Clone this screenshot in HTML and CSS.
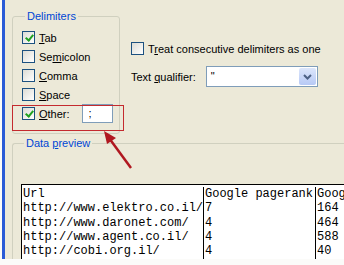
FILE: index.html
```html
<!DOCTYPE html>
<html lang="en">
<head>
  <meta charset="UTF-8" />
  <title>Text Import Wizard</title>
  <link rel="stylesheet" href="styles.css">
</head>
<body>
  <div class="frame">
    <div class="top">
      <fieldset class="group delims">
        <legend>Delimiters</legend>
        <label class="row"><span class="box checked"></span><span><u>T</u>ab</span></label>
        <label class="row"><span class="box"></span><span>Se<u>m</u>icolon</span></label>
        <label class="row"><span class="box"></span><span><u>C</u>omma</span></label>
        <label class="row"><span class="box"></span><span><u>S</u>pace</span></label>
        <label class="row other"><span class="box checked"></span><span><u>O</u>ther:</span><span class="field">;</span></label>
      </fieldset>

      <div class="options">
        <label class="row"><span class="box"></span><span>T<u>r</u>eat consecutive delimiters as one</span></label>
        <div class="qualifier">
          <span>Text <u>q</u>ualifier:</span>
          <div class="combo">
            <span class="combo-value">"</span>
            <span class="combo-btn">
              <svg width="9" height="6" viewBox="0 0 9 6"><path d="M1 1 L4.5 4.5 L8 1" fill="none" stroke="#4d6185" stroke-width="2"/></svg>
            </span>
          </div>
        </div>
      </div>
    </div>

    <fieldset class="group preview">
      <legend>Data <u>p</u>review</legend>
      <div class="grid">
        <div class="col c1">
          <div>Url</div>
          <div>http://www.elektro.co.il/</div>
          <div>http://www.daronet.com/</div>
          <div>http://www.agent.co.il/</div>
          <div>http://cobi.org.il/</div>
        </div>
        <div class="col c2">
          <div>Google pagerank</div>
          <div>7</div>
          <div>4</div>
          <div>4</div>
          <div>4</div>
        </div>
        <div class="col c3">
          <div>Goog</div>
          <div>164</div>
          <div>464</div>
          <div>588</div>
          <div>40</div>
        </div>
      </div>
    </fieldset>

    <!-- annotation overlay -->
    <div class="highlight"></div>
    <svg class="arrow" width="40" height="45" viewBox="0 0 40 45">
      <line x1="30" y1="38" x2="8" y2="8" stroke="#b01820" stroke-width="2.5"/>
      <polygon points="3,1 15,8 6,14" fill="#b01820"/>
    </svg>
  </div>
  <div class="bottom"></div>
</body>
</html>
```

FILE: styles.css
```css
* {
  box-sizing: border-box;
}

body {
  margin: 0;
  width: 344px;
  height: 265px;
  overflow: hidden;
  background: #fbfbf9;
  font-family: "Liberation Sans", Arial, sans-serif;
  font-size: 11px;
  color: #000;
}

.frame {
  position: relative;
  height: 259px;
  margin-left: 2px;
  border-left: 3px solid #2a5bd7;
  background: #ece9d8;
  padding: 10px 0 0 7px;
  overflow: hidden;
}

.top {
  display: flex;
  gap: 11px;
}

.group {
  margin: 0;
  border: 1px solid #d0d0bf;
  border-radius: 3px;
  padding: 0;
}

.group legend {
  color: #0046d5;
  padding: 0 2px;
  margin-left: 3px;
  line-height: 13px;
}

.delims {
  width: 108px;
  height: 124px;
  padding: 5px 0 0 9px;
}

.row {
  display: flex;
  align-items: center;
  gap: 4px;
  height: 19px;
}

.box {
  width: 13px;
  height: 13px;
  border: 1px solid #1c5180;
  background: linear-gradient(135deg, #dcdcd5, #fff);
  flex: none;
}

.box.checked {
  position: relative;
}

.box.checked::after {
  content: "";
  position: absolute;
  left: 2px;
  top: 1px;
  width: 3px;
  height: 6px;
  border: solid #21a121;
  border-width: 0 2px 2px 0;
  transform: translate(2px, 0) rotate(40deg);
}

.other .field {
  margin-left: 8px;
  width: 31px;
  height: 19px;
  border: 1px solid #7f9db9;
  background: #fff;
  padding: 2px 0 0 6px;
}

.options {
  padding-top: 29px;
}

.qualifier {
  display: flex;
  align-items: center;
  margin-top: 8px;
  gap: 10px;
}

.combo {
  width: 112px;
  height: 21px;
  border: 1px solid #7f9db9;
  background: #fff;
  display: flex;
  justify-content: space-between;
  padding: 1px;
}

.combo-value {
  padding: 2px 0 0 3px;
}

.combo-btn {
  width: 17px;
  background: linear-gradient(#dce6fb, #b7c9f5);
  border-radius: 2px;
  display: flex;
  align-items: center;
  justify-content: center;
}

.preview {
  margin-top: 3px;
  margin-right: -10px;
  height: 140px;
  border-right: none;
  padding: 34px 0 0 8px;
}

.grid {
  display: flex;
  background: #fff;
  border-top: 1px solid #000;
  border-left: 1px solid #000;
  height: 90px;
  font-family: "Liberation Mono", "Courier New", monospace;
  font-size: 12px;
  line-height: 14.25px;
  padding-top: 2px;
}

.col {
  padding-left: 1px;
  white-space: nowrap;
  overflow: hidden;
}

.c1 {
  width: 182px;
  border-right: 1px solid #000;
}

.c2 {
  width: 112px;
  border-right: 1px solid #000;
}

.c3 {
  flex: 1;
}

.highlight {
  position: absolute;
  left: 7px;
  top: 105px;
  width: 112px;
  height: 26px;
  border: 1px solid #c42a2e;
}

.arrow {
  position: absolute;
  left: 96px;
  top: 130px;
}

.bottom {
  height: 6px;
}
```
